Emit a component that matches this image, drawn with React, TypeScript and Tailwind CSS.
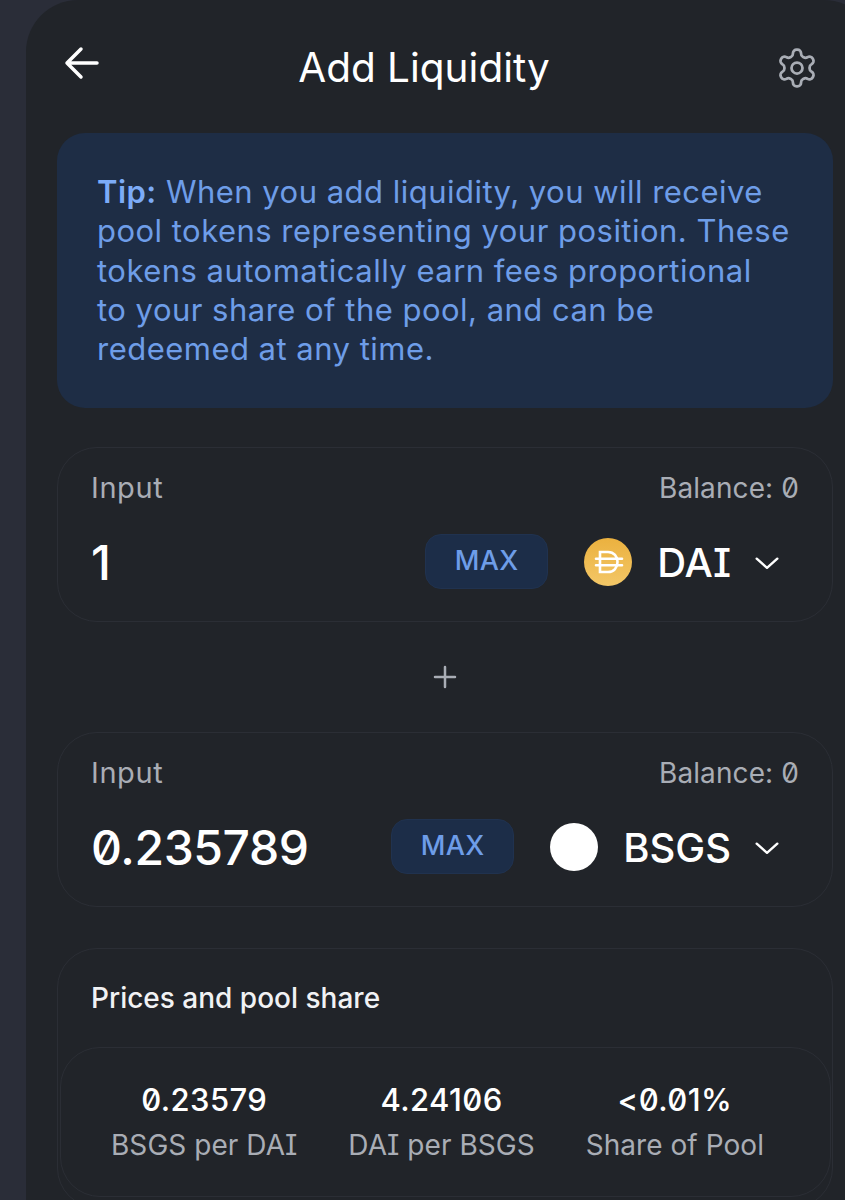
import React from "react";

function Chevron() {
  return (
    <svg width="26" height="26" viewBox="0 0 24 24" fill="none" stroke="#ffffff" strokeWidth="2.200" strokeLinecap="round" strokeLinejoin="round" className="ml-[23px] mb-[2px]">
      <path d="M2.500 8 L12 16.500 L21.500 8" />
    </svg>
  );
}

function Dai() {
  return (
    <svg width="48" height="48" viewBox="0 0 48 48" className="shrink-0">
      <defs>
        <linearGradient id="dg" x1="0" y1="0" x2="0" y2="1">
          <stop offset="0" stopColor="#EBB13F" />
          <stop offset="1" stopColor="#F3C767" />
        </linearGradient>
      </defs>
      <circle cx="24" cy="24" r="24" fill="url(#dg)" />
      <path d="M16 14h8c6 0 9.500 4.500 9.500 10s-3.500 10-9.500 10h-8z" fill="none" stroke="#fff" strokeWidth="2.600" />
      <path d="M12 20.700h26M12 27.300h26" stroke="#fff" strokeWidth="2.600" strokeLinecap="round" />
    </svg>
  );
}

function TokenCard({ value, token, icon, mt }: { value: string; token: string; icon: React.ReactNode; mt: string }) {
  return (
    <div className={`${mt} h-[175px] w-[776px] rounded-[40px] border border-[#2b2e35] px-[33px] flex flex-col`}>
      <div className="flex justify-between items-center leading-[32px] text-[#a9adb5] pt-[24px]">
        <span className="text-[29px] tracking-[0.6px]">Input</span>
        <span className="text-[28px] tracking-[0.1px] [font-feature-settings:'zero']">Balance: 0</span>
      </div>
      <div className="flex items-center mt-[30px]">
        <span className="mb-[2px] text-[48px] tracking-[-0.4px] leading-[56px] font-medium text-white [font-feature-settings:'zero'] flex-1">{value}</span>
        <button className="mb-[4px] h-[55px] w-[123px] rounded-[16px] bg-[#1c2d48] border border-[#20324f] text-[#6e9de8] text-[27px] font-medium tracking-[0.3px]">MAX</button>
        <span className="ml-[36px] mb-[3px]">{icon}</span>
        <span className="ml-[25px] mb-[2px] text-[40px] font-medium leading-[46px] text-white [font-feature-settings:'cv08']">{token}</span>
        <Chevron />
        <span className="w-[19px]" />
      </div>
    </div>
  );
}

function Stat({ a, b }: { a: string; b: string }) {
  return (
    <div className="flex flex-col items-center">
      <span className="text-[31px] tracking-[0.4px] leading-[36px] font-medium text-white [font-feature-settings:'zero']">{a}</span>
      <span className="text-[28px] tracking-[0.05px] leading-[34px] mt-[10px] text-[#a9adb5] [font-feature-settings:'cv08']">{b}</span>
    </div>
  );
}

export default function App() {
  return (
    <div className="w-[845px] h-[1200px] overflow-hidden bg-[#2a2d38] pl-[26px] font-['Inter',sans-serif]">
      <div className="w-[850px] h-[1200px] rounded-t-[52px] bg-[#212429] pl-[31px]">
        <div className="w-[776px] h-[133px] flex items-center justify-between">
          <svg width="40" height="40" viewBox="0 0 40 40" fill="none" stroke="#fff" strokeWidth="3.500" strokeLinecap="round" strokeLinejoin="round" className="ml-[4px] mb-[7px]">
            <path d="M36 20H6M20 6 6 20l14 14" />
          </svg>
          <span className="text-[40.500px] leading-[48px] font-normal text-white mb-[-2px] mr-[28px]">Add Liquidity</span>
          <svg width="44" height="44" viewBox="0 0 24 24" fill="none" stroke="#a9adb5" strokeWidth="1.500" strokeLinecap="round" strokeLinejoin="round" className="mr-[14px] mb-[-2px]">
            <path d="M12.220 2h-.44a2 2 0 0 0-2 2v.180a2 2 0 0 1-1 1.730l-.430.250a2 2 0 0 1-2 0l-.150-.080a2 2 0 0 0-2.730.730l-.220.380a2 2 0 0 0 .730 2.730l.150.100a2 2 0 0 1 1 1.720v.510a2 2 0 0 1-1 1.740l-.150.090a2 2 0 0 0-.730 2.730l.220.380a2 2 0 0 0 2.730.730l.150-.080a2 2 0 0 1 2 0l.430.250a2 2 0 0 1 1 1.730V20a2 2 0 0 0 2 2h.44a2 2 0 0 0 2-2v-.180a2 2 0 0 1 1-1.730l.430-.250a2 2 0 0 1 2 0l.150.080a2 2 0 0 0 2.730-.730l.220-.390a2 2 0 0 0-.730-2.730l-.150-.080a2 2 0 0 1-1-1.740v-.500a2 2 0 0 1 1-1.740l.150-.090a2 2 0 0 0 .730-2.730l-.220-.380a2 2 0 0 0-2.730-.730l-.150.080a2 2 0 0 1-2 0l-.430-.250a2 2 0 0 1-1-1.730V4a2 2 0 0 0-2-2z" />
            <circle cx="12" cy="12" r="3" />
          </svg>
        </div>

        <div className="w-[776px] h-[275px] rounded-[28px] bg-[#1e2d45] pl-[40px] pt-[39px] text-[31px] tracking-[0.48px] leading-[39.300px] text-[#6e9de8] whitespace-nowrap">
          <div><b className="font-semibold text-[#7cabf7]">Tip:</b> When you add liquidity, you will receive</div>
          <div>pool tokens representing your position. These</div>
          <div>tokens automatically earn fees proportional</div>
          <div>to your share of the pool, and can be</div>
          <div>redeemed at any time.</div>
        </div>

        <TokenCard mt="mt-[39px]" value="1" token="DAI" icon={<Dai />} />

        <div className="h-[110px] w-[776px] flex items-center justify-center">
          <svg width="24" height="24" viewBox="0 0 24 24" stroke="#a9adb5" strokeWidth="2.500" strokeLinecap="round">
            <path d="M12 2v20M2 12h20" />
          </svg>
        </div>

        <TokenCard mt="" value="0.235789" token="BSGS" icon={<div className="w-[48px] h-[48px] rounded-full bg-white" />} />

        <div className="mt-[41px] w-[776px] h-[260px] rounded-[40px] border border-[#2b2e35]">
          <div className="pl-[33px] pt-[32px] text-[28px] leading-[34px] font-medium text-[#f1f2f4]">Prices and pool share</div>
          <div className="mt-[32px] ml-[2px] w-[771px] h-[150px] rounded-[40px] border border-[#2b2e35] flex justify-between items-start pt-[34px] pl-[50px] pr-[66px]">
            <Stat a="0.23579" b="BSGS per DAI" />
            <Stat a="4.24106" b="DAI per BSGS" />
            <Stat a="<0.01%" b="Share of Pool" />
          </div>
        </div>
      </div>
    </div>
  );
}
